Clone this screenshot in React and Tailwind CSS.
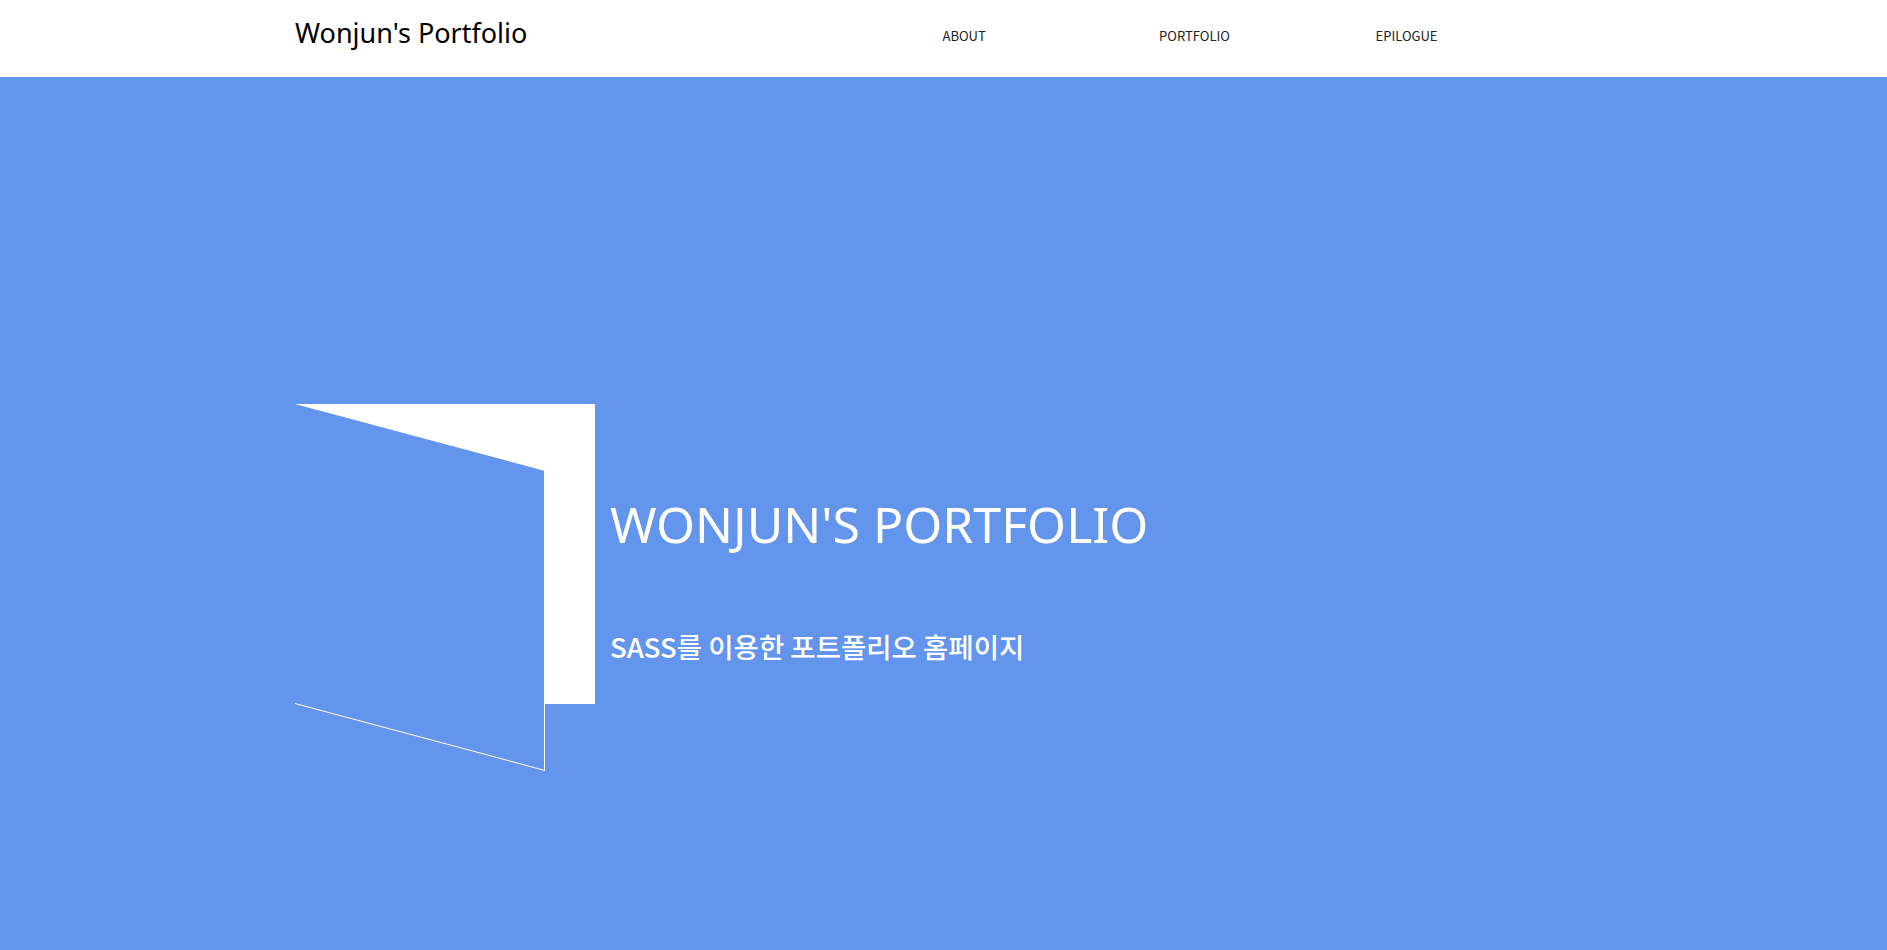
import React from 'react';

const navItems = ['ABOUT', 'PORTFOLIO', 'EPILOGUE'];

function Header() {
  return (
    <header className="h-[77px] bg-white">
      <div className="mx-auto flex h-full w-[1297px] items-start">
        <h1
          className="mt-[19px] w-[654px] text-[27px] leading-none text-black"
          style={{ fontFamily: '"Noto Sans", "Noto Sans CJK KR", sans-serif' }}
        >
          Wonjun's Portfolio
        </h1>
        <ul className="mt-[29px] flex">
          {navItems.map(item => (
            <li
              key={item}
              className="w-[216.5px] text-[13px] leading-none text-[#222]"
              style={{ fontFamily: '"Noto Sans CJK KR", sans-serif' }}
            >
              {item}
            </li>
          ))}
        </ul>
      </div>
    </header>
  );
}

function Hero() {
  return (
    <section className="h-[873px] bg-[#6495ED]">
      <div className="mx-auto flex w-[1297px] pt-[327px]">
        <div className="relative h-[300px] w-[300px] bg-white">
          <div className="absolute left-0 top-0 h-[300px] w-[250px] origin-top-left skew-y-[15deg] border-b border-r border-white bg-[#6495ED]" />
        </div>
        <div
          className="ml-[15px] text-white"
          style={{ fontFamily: '"Noto Sans", "Noto Sans CJK KR", sans-serif' }}
        >
          <h2 className="mt-[95px] text-[50px] leading-none">WONJUN'S PORTFOLIO</h2>
          <p className="mt-[84px] text-[27.5px] font-medium leading-none" style={{ fontFamily: '"Noto Sans CJK KR", sans-serif' }}>
            SASS를 이용한 포트폴리오 홈페이지
          </p>
        </div>
      </div>
    </section>
  );
}

export default function App() {
  return (
    <div className="overflow-hidden">
      <Header />
      <Hero />
    </div>
  );
}
